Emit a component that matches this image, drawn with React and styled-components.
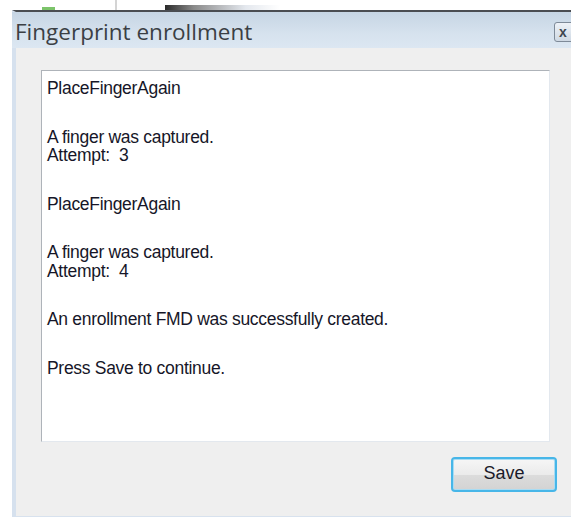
import styled, { createGlobalStyle } from 'styled-components';

const GlobalStyle = createGlobalStyle`
  html, body {
    margin: 0;
    padding: 0;
    background: #ffffff;
    overflow: hidden;
  }
`;

const Page = styled.div`
  width: 571px;
  height: 517px;
  overflow: hidden;
  display: flex;
  flex-direction: column;
`;

// Edge of whatever sits behind the dialog
const BackStrip = styled.div`
  height: 10px;
  display: flex;
  align-items: flex-end;
  flex-shrink: 0;
`;

const StripBit = styled.div`
  margin-left: ${p => p.$left}px;
  width: ${p => p.$width}px;
  height: ${p => p.$height}px;
  background: ${p => p.$bg};
`;

const Window = styled.div`
  margin-left: 12px;
  width: 567px;
  height: 507px;
  border-top: 2px solid #4a4d52;
  border-left: 4px solid #d6e1ee;
  display: flex;
  flex-direction: column;
  box-sizing: border-box;
  flex-shrink: 0;
`;

const TitleBar = styled.div`
  height: 36px;
  margin-left: -4px;
  padding-left: 3px;
  display: flex;
  align-items: center;
  background: linear-gradient(#c6d5e4, #d6e2ee 60%, #dce7f2);
  flex-shrink: 0;
`;

const Title = styled.div`
  font-family: 'Open Sans', 'Noto Sans', sans-serif;
  font-size: 22.5px;
  color: #3b3f44;
  padding-top: 2px;
`;

const CloseButton = styled.div`
  margin-left: auto;
  margin-right: 3px;
  width: 22px;
  height: 20px;
  margin-top: 3px;
  border: 1px solid #7e8a98;
  border-radius: 3px;
  background: linear-gradient(#eef2f7, #cfd9e4);
  display: flex;
  align-items: center;
  justify-content: flex-start;
  font-family: 'Liberation Sans', Arial, sans-serif;
  font-weight: bold;
  font-size: 14px;
  color: #3d4650;
  box-sizing: border-box;
  padding-left: 4px;
`;

const Body = styled.div`
  flex: 1;
  background: #efefef;
  border-bottom: 1px solid #d8e2ee;
  padding: 22px 0 0 25px;
  display: flex;
  flex-direction: column;
`;

const LogBox = styled.div`
  width: 509px;
  height: 372px;
  box-sizing: border-box;
  background: #ffffff;
  border: 1px solid #aeb3b9;
  border-right-color: #e3e8ee;
  border-bottom-color: #e3e8ee;
  padding: 8px 5px;
  font-family: 'Liberation Sans', Arial, sans-serif;
  font-size: 17.5px;
  color: #161628;
  letter-spacing: -0.3px;
`;

const Paragraph = styled.div`
  margin-bottom: 30px;
`;

const Line = styled.div`
  line-height: 18.5px;
  white-space: pre;
`;

const ButtonRow = styled.div`
  width: 516px;
  display: flex;
  justify-content: flex-end;
  margin-top: 15px;
`;

const SaveButton = styled.button`
  width: 106px;
  height: 35px;
  box-sizing: border-box;
  border: 2px solid #47b6e8;
  border-radius: 4px;
  box-shadow: inset 0 0 0 1px #a9dcf3;
  background: linear-gradient(#f6f6f6, #ebebeb 50%, #dcdcdc 51%, #d3d3d3);
  font-family: 'Liberation Sans', Arial, sans-serif;
  font-size: 18px;
  color: #1a1a2a;
  padding: 0 0 2px 0;
`;

const log = [
  ['PlaceFingerAgain'],
  ['A finger was captured.', 'Attempt:  3'],
  ['PlaceFingerAgain'],
  ['A finger was captured.', 'Attempt:  4'],
  ['An enrollment FMD was successfully created.'],
  ['Press Save to continue.'],
];

export default function App() {
  return (
    <Page>
      <GlobalStyle />
      <BackStrip>
        <StripBit $left={42} $width={13} $height={3} $bg="#7cc46a" />
        <StripBit $left={60} $width={2} $height={10} $bg="#d4d4d4" />
        <StripBit
          $left={48}
          $width={115}
          $height={5}
          $bg="linear-gradient(90deg, #2a2a2a, #8a8a8a 25%, #e4e8ee 70%, #ffffff)"
        />
      </BackStrip>
      <Window>
        <TitleBar>
          <Title>Fingerprint enrollment</Title>
          <CloseButton>x</CloseButton>
        </TitleBar>
        <Body>
          <LogBox>
            {log.map((para, i) => (
              <Paragraph key={i}>
                {para.map((text, j) => (
                  <Line key={j}>{text}</Line>
                ))}
              </Paragraph>
            ))}
          </LogBox>
          <ButtonRow>
            <SaveButton>Save</SaveButton>
          </ButtonRow>
        </Body>
      </Window>
    </Page>
  );
}
